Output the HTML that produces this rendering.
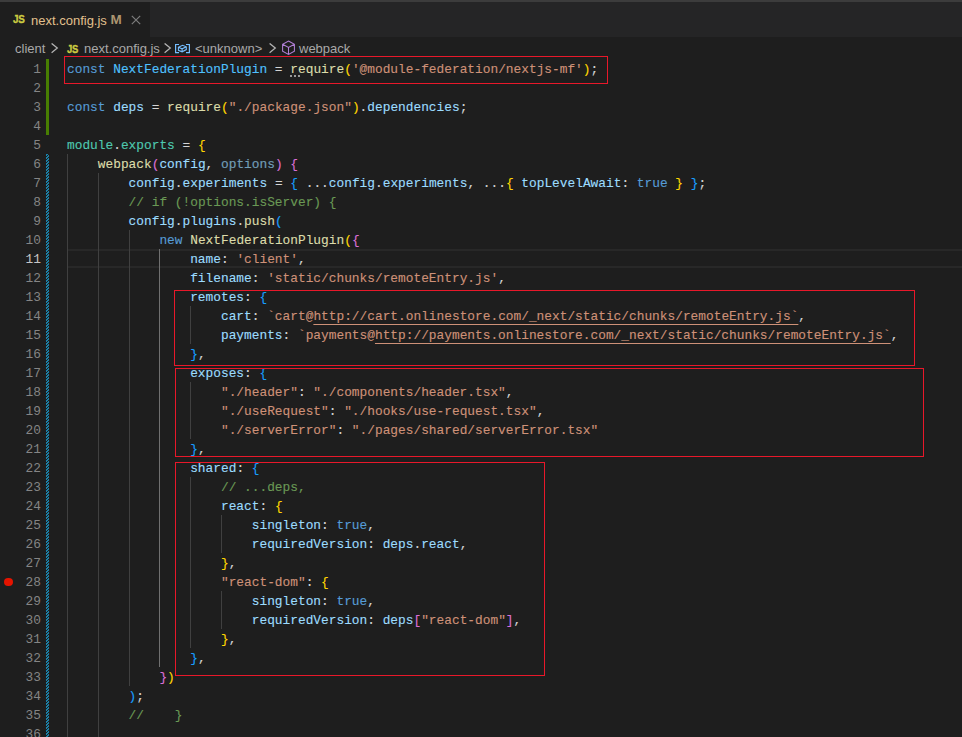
<!DOCTYPE html>
<html><head><meta charset="utf-8">
<style>
*{margin:0;padding:0;box-sizing:border-box}
html,body{width:962px;height:737px;overflow:hidden;background:#1e1e1e}
body{position:relative;font-family:"Liberation Sans",sans-serif}
.topstrip{position:absolute;left:0;top:0;width:962px;height:2px;background:#3c3c3c}
.tabbar{position:absolute;left:0;top:2px;width:962px;height:35px;background:#252526}
.tab{position:absolute;left:0;top:0;width:150px;height:35px;background:#1e1e1e}
.tab .js{position:absolute;left:13px;top:11px;font-weight:bold;font-size:11.5px;color:#cbcb41;letter-spacing:-0.3px;-webkit-text-stroke:0.35px #cbcb41;transform:scaleX(0.86);transform-origin:0 0}
.tab .name{position:absolute;left:31px;top:11px;font-size:13px;color:#e2c08d}
.tab .mod{position:absolute;left:110.5px;top:10px;font-size:13.5px;font-weight:bold;color:#ad9570}
.tab .close{position:absolute;left:130.5px;top:12.5px;width:10px;height:10px}
.crumbs{position:absolute;left:0;top:37px;width:962px;height:22px;font-size:13px;color:#a9a9a9}
.crumbs span{position:absolute;top:4px;white-space:nowrap}
.gut{position:absolute;left:0;top:59px;width:67px;height:678px}
.num{position:absolute;left:0;margin-top:1px;width:41px;height:19px;line-height:19px;text-align:right;font-family:"Liberation Mono",monospace;font-size:12.83px;color:#858585}
.num.cur{color:#c6c6c6}
.ln{position:absolute;left:67px;margin-top:1px;height:19px;line-height:19px;white-space:pre;font-family:"Liberation Mono",monospace;font-size:12.83px;color:#d4d4d4;-webkit-text-stroke:0.12px currentColor}
.k{color:#569cd6}.f{color:#dcdcaa}.v{color:#9cdcfe}.c{color:#4fc1ff}.s{color:#ce9178}.t{color:#4ec9b0}.m{color:#6a9955}
.b1{color:#ffd700}.b2{color:#da70d6}.b3{color:#179fff}.o{color:#9cdcfe;opacity:.67}
.u{color:#ce9178;text-decoration:underline;text-underline-offset:4px;text-decoration-skip-ink:none;text-decoration-thickness:1px}
.guide{position:absolute;width:1px;background:#404040}
.guide.act{background:#707070}
.curline{position:absolute;left:68px;top:249px;width:894px;height:19px;border-top:2px solid #282828;border-bottom:2px solid #282828}
.added{position:absolute;left:46px;top:59px;width:3px;height:76px;background:#487e02}
.modif{position:absolute;left:46px;top:154px;width:3px;height:590px;background-image:linear-gradient(-45deg,#1b81a8 25%,#1e1e1e 25%,#1e1e1e 50%,#1b81a8 50%,#1b81a8 75%,#1e1e1e 75%,#1e1e1e);background-size:3px 3px;background-position:0 -1px}
.bp{position:absolute;left:4.4px;top:577.6px;width:8.7px;height:8.5px;border-radius:50%;background:#e51400}
.box{position:absolute;border:1px solid #e8182a}
.dots{position:absolute;top:75px;width:2px;height:2px;background:#9a9a9a}
</style></head><body>
<div class="topstrip"></div>
<div class="tabbar"><div class="tab">
<span class="js">JS</span><span class="name">next.config.js</span><span class="mod">M</span>
<svg class="close" viewBox="0 0 10 10"><path d="M0.8 0.8L9.2 9.2M9.2 0.8L0.8 9.2" stroke="#7c7c7c" stroke-width="1.2"/></svg>
</div></div>
<div class="crumbs">
<span style="left:15px">client</span>
<svg style="position:absolute;left:51px;top:6px" width="8" height="11" viewBox="0 0 8 11"><path d="M0.6 0.4L6.3 5.1L0.6 9.8" fill="none" stroke="#b4b4b4" stroke-width="1.25"/></svg>
<span style="left:67px;top:5.5px;font-weight:bold;font-size:10.5px;color:#cbcb41;letter-spacing:-0.3px;-webkit-text-stroke:0.35px #cbcb41;transform:scaleX(0.9);transform-origin:0 0">JS</span>
<span style="left:84px">next.config.js</span>
<svg style="position:absolute;left:164px;top:6px" width="8" height="11" viewBox="0 0 8 11"><path d="M0.6 0.4L6.3 5.1L0.6 9.8" fill="none" stroke="#b4b4b4" stroke-width="1.25"/></svg>
<svg style="position:absolute;left:174px;top:6px" width="17" height="11" viewBox="0 0 17 11"><path d="M5 1.5H1.6V9.6H5 M12 1.5H15.4V9.6H12" fill="none" stroke="#75beff" stroke-width="1.2"/><path d="M4.4 4.3L8.6 2.3L12.3 3.8V6.6L8.1 8.8L4.4 7.3Z M4.4 4.3L8.1 5.8L12.3 3.8 M8.1 5.8V8.8" fill="none" stroke="#75beff" stroke-width="1.1"/></svg>
<span style="left:195px">&lt;unknown&gt;</span>
<svg style="position:absolute;left:269px;top:6px" width="8" height="11" viewBox="0 0 8 11"><path d="M0.6 0.4L6.3 5.1L0.6 9.8" fill="none" stroke="#b4b4b4" stroke-width="1.25"/></svg>
<svg style="position:absolute;left:282px;top:3px" width="14" height="16" viewBox="0 0 14 16"><path d="M6.5 1L12.4 4.2V11.1L6.5 14.4L0.6 11.1V4.2Z M0.6 4.2L6.5 7.4L12.4 4.2 M6.5 7.4V14.4" fill="none" stroke="#b180d7" stroke-width="1.05" stroke-linejoin="miter"/></svg>
<span style="left:299px">webpack</span>
</div>
<div class="curline"></div>
<div class="guide" style="left:67.00px;top:154px;height:589px"></div>
<div class="guide" style="left:97.78px;top:173px;height:570px"></div>
<div class="guide" style="left:128.56px;top:230px;height:456px"></div>
<div class="guide act" style="left:159.34px;top:249px;height:418px"></div>
<div class="guide" style="left:190.12px;top:306px;height:38px"></div>
<div class="guide" style="left:190.12px;top:382px;height:57px"></div>
<div class="guide" style="left:190.12px;top:477px;height:171px"></div>
<div class="guide" style="left:220.91px;top:515px;height:38px"></div>
<div class="guide" style="left:220.91px;top:591px;height:38px"></div>
<div class="added"></div>
<div class="modif"></div>
<div class="bp"></div>
<div class="num" style="top:59px">1</div>
<div class="num" style="top:78px">2</div>
<div class="num" style="top:97px">3</div>
<div class="num" style="top:116px">4</div>
<div class="num" style="top:135px">5</div>
<div class="num" style="top:154px">6</div>
<div class="num" style="top:173px">7</div>
<div class="num" style="top:192px">8</div>
<div class="num" style="top:211px">9</div>
<div class="num" style="top:230px">10</div>
<div class="num cur" style="top:249px">11</div>
<div class="num" style="top:268px">12</div>
<div class="num" style="top:287px">13</div>
<div class="num" style="top:306px">14</div>
<div class="num" style="top:325px">15</div>
<div class="num" style="top:344px">16</div>
<div class="num" style="top:363px">17</div>
<div class="num" style="top:382px">18</div>
<div class="num" style="top:401px">19</div>
<div class="num" style="top:420px">20</div>
<div class="num" style="top:439px">21</div>
<div class="num" style="top:458px">22</div>
<div class="num" style="top:477px">23</div>
<div class="num" style="top:496px">24</div>
<div class="num" style="top:515px">25</div>
<div class="num" style="top:534px">26</div>
<div class="num" style="top:553px">27</div>
<div class="num" style="top:572px">28</div>
<div class="num" style="top:591px">29</div>
<div class="num" style="top:610px">30</div>
<div class="num" style="top:629px">31</div>
<div class="num" style="top:648px">32</div>
<div class="num" style="top:667px">33</div>
<div class="num" style="top:686px">34</div>
<div class="num" style="top:705px">35</div>
<div class="num" style="top:724px">36</div>
<div class="ln" style="top:59px"><span class="k">const</span> <span class="c">NextFederationPlugin</span> = <span class="f">require</span><span class="b1">(</span><span class="s">&#x27;@module-federation/nextjs-mf&#x27;</span><span class="b1">)</span>;</div>
<div class="ln" style="top:78px"></div>
<div class="ln" style="top:97px"><span class="k">const</span> <span class="v">deps</span> = <span class="f">require</span><span class="b1">(</span><span class="s">&quot;./package.json&quot;</span><span class="b1">)</span>.<span class="v">dependencies</span>;</div>
<div class="ln" style="top:116px"></div>
<div class="ln" style="top:135px"><span class="t">module</span>.<span class="t">exports</span> = <span class="b1">{</span></div>
<div class="ln" style="top:154px">    <span class="f">webpack</span><span class="b2">(</span><span class="v">config</span>, <span class="o">options</span><span class="b2">)</span> <span class="b2">{</span></div>
<div class="ln" style="top:173px">        <span class="v">config</span>.<span class="v">experiments</span> = <span class="b3">{</span> ...<span class="v">config</span>.<span class="v">experiments</span>, ...<span class="b1">{</span> <span class="v">topLevelAwait</span>: <span class="k">true</span> <span class="b1">}</span> <span class="b3">}</span>;</div>
<div class="ln" style="top:192px">        <span class="m">// if (!options.isServer) {</span></div>
<div class="ln" style="top:211px">        <span class="v">config</span>.<span class="v">plugins</span>.<span class="f">push</span><span class="b3">(</span></div>
<div class="ln" style="top:230px">            <span class="k">new</span> <span class="f">NextFederationPlugin</span><span class="b1">(</span><span class="b2">{</span></div>
<div class="ln" style="top:249px">                <span class="v">name</span>: <span class="s">&#x27;client&#x27;</span>,</div>
<div class="ln" style="top:268px">                <span class="v">filename</span>: <span class="s">&#x27;static/chunks/remoteEntry.js&#x27;</span>,</div>
<div class="ln" style="top:287px">                <span class="v">remotes</span>: <span class="b3">{</span></div>
<div class="ln" style="top:306px">                    <span class="v">cart</span>: <span class="s">`cart@</span><span class="u">http://cart.onlinestore.com/_next/static/chunks/remoteEntry.js`</span>,</div>
<div class="ln" style="top:325px">                    <span class="v">payments</span>: <span class="s">`payments@</span><span class="u">http://payments.onlinestore.com/_next/static/chunks/remoteEntry.js`</span>,</div>
<div class="ln" style="top:344px">                <span class="b3">}</span>,</div>
<div class="ln" style="top:363px">                <span class="v">exposes</span>: <span class="b3">{</span></div>
<div class="ln" style="top:382px">                    <span class="s">&quot;./header&quot;</span>: <span class="s">&quot;./components/header.tsx&quot;</span>,</div>
<div class="ln" style="top:401px">                    <span class="s">&quot;./useRequest&quot;</span>: <span class="s">&quot;./hooks/use-request.tsx&quot;</span>,</div>
<div class="ln" style="top:420px">                    <span class="s">&quot;./serverError&quot;</span>: <span class="s">&quot;./pages/shared/serverError.tsx&quot;</span></div>
<div class="ln" style="top:439px">                <span class="b3">}</span>,</div>
<div class="ln" style="top:458px">                <span class="v">shared</span>: <span class="b3">{</span></div>
<div class="ln" style="top:477px">                    <span class="m">// ...deps,</span></div>
<div class="ln" style="top:496px">                    <span class="v">react</span>: <span class="b1">{</span></div>
<div class="ln" style="top:515px">                        <span class="v">singleton</span>: <span class="k">true</span>,</div>
<div class="ln" style="top:534px">                        <span class="v">requiredVersion</span>: <span class="v">deps</span>.<span class="v">react</span>,</div>
<div class="ln" style="top:553px">                    <span class="b1">}</span>,</div>
<div class="ln" style="top:572px">                    <span class="s">&quot;react-dom&quot;</span>: <span class="b1">{</span></div>
<div class="ln" style="top:591px">                        <span class="v">singleton</span>: <span class="k">true</span>,</div>
<div class="ln" style="top:610px">                        <span class="v">requiredVersion</span>: <span class="v">deps</span><span class="b2">[</span><span class="s">&quot;react-dom&quot;</span><span class="b2">]</span>,</div>
<div class="ln" style="top:629px">                    <span class="b1">}</span>,</div>
<div class="ln" style="top:648px">                <span class="b3">}</span>,</div>
<div class="ln" style="top:667px">            <span class="b2">}</span><span class="b1">)</span></div>
<div class="ln" style="top:686px">        <span class="b3">)</span>;</div>
<div class="ln" style="top:705px">        <span class="m">//    }</span></div>
<div class="ln" style="top:724px"></div>
<div class="dots" style="left:290px"></div><div class="dots" style="left:294px"></div><div class="dots" style="left:298px"></div>
<div class="box" style="left:64px;top:56px;width:544px;height:28px"></div>
<div class="box" style="left:174px;top:290px;width:741px;height:76px"></div>
<div class="box" style="left:175px;top:368px;width:749px;height:89px"></div>
<div class="box" style="left:175px;top:462px;width:370px;height:214px"></div>
</body></html>
